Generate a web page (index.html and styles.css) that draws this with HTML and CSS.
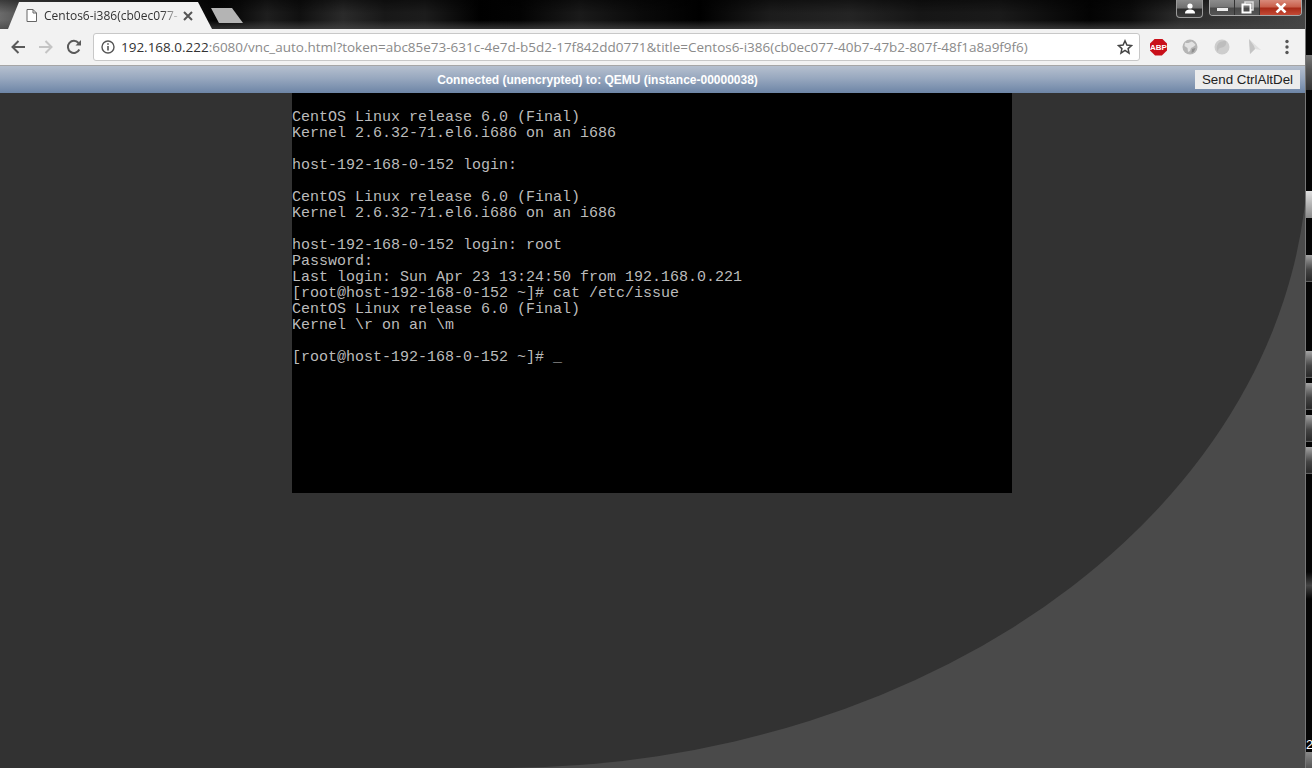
FILE: index.html
```html
<!DOCTYPE html>
<html lang="en">
<head>
<meta charset="utf-8">
<title>Centos6-i386</title>
<link rel="stylesheet" href="styles.css">
</head>
<body>
<div class="desktop">
  <div class="window">
    <header class="titlebar">
      <div class="tab">
        <svg class="tab-file" viewBox="0 0 11 13" width="11" height="13"><path d="M1 .5h6l3.500 3.500v8.500h-9.500z M7 .5v3.500h3.500" fill="#fff" stroke="#666" stroke-width="1"/></svg>
        <span class="tab-title">Centos6-i386(cb0ec077-</span>
        <svg class="tab-close" viewBox="0 0 10 10" width="10" height="10"><path d="M1 1l8 8M9 1l-8 8" stroke="#555" stroke-width="2"/></svg>
      </div>
      <div class="newtab"></div>
      <div class="winctl">
        <div class="userbtn">
          <svg viewBox="0 0 12 11" width="12" height="11"><circle cx="6" cy="3" r="2.600" fill="#fff"/><path d="M1 10.500c0-3 2-4 5-4s5 1 5 4z" fill="#fff"/></svg>
        </div>
        <div class="ctlgroup">
          <div class="ctl ctl-min"><span class="minbar"></span></div>
          <div class="ctl ctl-max">
            <svg viewBox="0 0 13 13" width="13" height="13"><path d="M4 3V1h8v8h-2" fill="none" stroke="#ddd" stroke-width="1.500"/><rect x="1.500" y="3.500" width="8" height="8" fill="none" stroke="#fff" stroke-width="2"/></svg>
          </div>
          <div class="ctl ctl-close">
            <svg viewBox="0 0 12 10" width="12" height="10"><path d="M1.500 .5l9 9M10.500 .5l-9 9" stroke="#fff" stroke-width="2.600"/></svg>
          </div>
        </div>
      </div>
    </header>

    <nav class="toolbar">
      <svg class="navicon" viewBox="0 0 16 16" width="16" height="16"><path d="M15 8H3M8.500 2L2.500 8l6 6" fill="none" stroke="#5a5a5a" stroke-width="2"/></svg>
      <svg class="navicon navicon-off" viewBox="0 0 16 16" width="16" height="16"><path d="M1 8h12M7.500 2l6 6-6 6" fill="none" stroke="#c4c4c4" stroke-width="2"/></svg>
      <svg class="navicon" viewBox="0 0 16 16" width="16" height="16"><path d="M13.300 10.500A6 6 0 1 1 12.500 4" fill="none" stroke="#5a5a5a" stroke-width="2"/><path d="M9.500 6.500H15V1z" fill="#5a5a5a"/></svg>
      <div class="omnibox">
        <svg class="info" viewBox="0 0 14 14" width="14" height="14"><circle cx="7" cy="7" r="6" fill="none" stroke="#555" stroke-width="1.400"/><path d="M7 6v4.500M7 3.200v1.600" stroke="#555" stroke-width="1.600"/></svg>
        <span class="url"><span class="url-host">192.168.0.222</span>:6080/vnc_auto.html?token=abc85e73-631c-4e7d-b5d2-17f842dd0771&amp;title=Centos6-i386(cb0ec077-40b7-47b2-807f-48f1a8a9f9f6)</span>
        <svg class="star" viewBox="0 0 16 16" width="16" height="16"><path d="M8 1.800l1.900 4.200 4.600.5-3.400 3.100.9 4.500L8 11.300l-4 2.800.9-4.500L1.500 6.500l4.600-.5z" fill="none" stroke="#444" stroke-width="1.500"/></svg>
      </div>
      <div class="extensions">
        <div class="abp">ABP</div>
        <svg class="ext" viewBox="0 0 16 16" width="16" height="16"><circle cx="8" cy="8" r="7.500" fill="#b5b5b5"/><path d="M3 3.500c2 1 5 .5 6-1 2 .5 4 2 4.500 3.500L11 8l-2 1-1 3-2 1-.5-4L2.500 7z" fill="#e2e2e2"/><path d="M10 10l3.500-1-1.500 3.500-2.500 1.500z" fill="#8f8f8f"/></svg>
        <svg class="ext" viewBox="0 0 16 16" width="16" height="16"><circle cx="8" cy="8" r="7.500" fill="#cdcdcd"/><path d="M4 5c2-3 5-3 8-3 1 3-1 6-4 6.500S4 10 4 13C2 10 2.500 7 4 5z" fill="#bdbdbd"/></svg>
        <svg class="ext" viewBox="0 0 16 16" width="16" height="16"><path d="M3 0l12 11-6-1-5 5z" fill="#e0e0e0"/><path d="M3 0l5 7 1 3-5 5z" fill="#c4c4c4"/></svg>
        <svg class="ext-menu" viewBox="0 0 4 16" width="4" height="16"><circle cx="2" cy="2.500" r="1.700" fill="#555"/><circle cx="2" cy="8" r="1.700" fill="#555"/><circle cx="2" cy="13.500" r="1.700" fill="#555"/></svg>
      </div>
    </nav>

    <div class="vncbar">
      <div class="vncstatus">Connected (unencrypted) to: QEMU (instance-00000038)</div>
      <button class="vncbtn" type="button">Send CtrlAltDel</button>
    </div>

    <main class="stage">
      <svg class="swoosh" viewBox="0 93 1305 675" width="1305" height="675" preserveAspectRatio="none"><path d="M0 93H1308V150A808 618 0 0 1 500 768H0Z" fill="#323232"/></svg>
      <pre class="console">CentOS Linux release 6.0 (Final)
Kernel 2.6.32-71.el6.i686 on an i686

host-192-168-0-152 login:

CentOS Linux release 6.0 (Final)
Kernel 2.6.32-71.el6.i686 on an i686

host-192-168-0-152 login: root
Password:
Last login: Sun Apr 23 13:24:50 from 192.168.0.221
[root@host-192-168-0-152 ~]# cat /etc/issue
CentOS Linux release 6.0 (Final)
Kernel \r on an \m

[root@host-192-168-0-152 ~]# _</pre>
    </main>
  </div>

  <aside class="edge">
    <i></i><b class="dull"></b>
    <i></i><b class="bright"></b>
    <i></i><b></b>
    <i></i><b></b>
    <i></i><b></b>
    <i></i><b></b>
    <i></i><b></b>
    <i></i><b class="faint"></b>
    <i></i><span class="edge-num">2</span>
    <b class="foot"></b>
  </aside>
</div>
</body>
</html>
```

FILE: styles.css
```css
* { box-sizing: border-box; }

html, body {
  margin: 0;
  height: 100%;
  overflow: hidden;
  background: #000;
}

.desktop {
  display: flex;
  width: 1312px;
  height: 768px;
}

.window {
  display: flex;
  flex-direction: column;
  width: 1305px;
  height: 768px;
}

/* Title strip */
.titlebar {
  display: flex;
  align-items: flex-start;
  height: 29px;
  flex: none;
  background:
    linear-gradient(to bottom, rgba(0,0,0,.45) 0, rgba(0,0,0,0) 45%, rgba(60,60,60,0) 70%, rgba(70,70,70,.7) 100%),
    linear-gradient(to right, #6a6a6a 0, #555 20px, #050505 215px, #0c0c0c 240px, #1e1e1e 267px, #101010 300px, #2a2a2a 343px, #181818 385px, #1c1c1c 425px, #000 480px, #030303 520px, #1a1a1a 580px, #0a0a0a 640px, #000 700px, #1c1c1c 770px, #242424 850px, #161616 920px, #1a1a1a 1000px, #030303 1090px, #0c0c0c 1130px, #2c2c2c 1180px, #444 1304px);
}

.tab {
  display: flex;
  align-items: center;
  width: 204px;
  height: 27px;
  margin: 2px 0 0 8px;
  padding: 0 19px 0 18px;
  background: #f2f2f2;
  clip-path: polygon(0 100%, 11px 0, 190px 0, 204px 100%);
}

.tab-file { flex: none; }

.tab-title {
  flex: 1;
  min-width: 0;
  margin-left: 7px;
  font: 12px "Open Sans", "Liberation Sans", sans-serif;
  color: #333;
  white-space: nowrap;
  -webkit-mask-image: linear-gradient(to right, #000 88%, rgba(0,0,0,.2) 100%);
  mask-image: linear-gradient(to right, #000 88%, rgba(0,0,0,.2) 100%);
}

.tab-close {
  flex: none;
  margin-left: 5px;
}

.newtab {
  flex: none;
  width: 32px;
  height: 15px;
  margin: 8px 0 0 -1px;
  background: #b4b4b4;
  clip-path: polygon(0 0, 21px 0, 32px 100%, 8px 100%);
}

.winctl {
  display: flex;
  align-items: flex-start;
  gap: 6px;
  margin-left: auto;
  padding-right: 3px;
}

.userbtn {
  display: flex;
  align-items: center;
  justify-content: center;
  width: 27px;
  height: 18px;
  border: 1px solid #9a9a9a;
  border-top: 0;
  border-radius: 0 0 4px 4px;
  background: linear-gradient(to bottom, #8a8a8a 0, #707070 45%, #2c2c2c 55%, #3c3c3c 100%);
}

.ctlgroup {
  display: flex;
  width: 93px;
  height: 16px;
  border: 1px solid #a8a8a8;
  border-top: 0;
  border-radius: 0 0 4px 4px;
  overflow: hidden;
}

.ctl {
  display: flex;
  align-items: center;
  justify-content: center;
  height: 100%;
}

.ctl-min, .ctl-max {
  width: 25px;
  border-right: 1px solid #333;
  background: linear-gradient(to bottom, #8c8c8c 0, #777 45%, #4a4a4a 55%, #555 100%);
}

.minbar {
  display: block;
  width: 11px;
  height: 3px;
  margin-top: 4px;
  background: #eee;
}

.ctl-close {
  flex: 1;
  background: linear-gradient(to bottom, #d98a7a 0, #c9604c 45%, #a92b18 55%, #c44a36 100%);
}

/* Toolbar */
.toolbar {
  display: flex;
  align-items: center;
  height: 37px;
  flex: none;
  padding-left: 10px;
  background: #f2f2f2;
  border-bottom: 1px solid #a6a6a6;
}

.navicon {
  flex: none;
  margin-right: 12px;
}

.omnibox {
  display: flex;
  align-items: center;
  flex: none;
  width: 1047px;
  height: 28px;
  margin-left: -1px;
  padding: 0 6px 0 7px;
  background: #fff;
  border: 1px solid #c8c8c8;
  border-radius: 3px;
}

.info { flex: none; }

.url {
  flex: 1;
  min-width: 0;
  margin-left: 6px;
  font: 13.47px "Open Sans", "Liberation Sans", sans-serif;
  color: #8a8a8a;
  white-space: nowrap;
}

.url-host { color: #333; }

.star { flex: none; }

.extensions {
  display: flex;
  align-items: center;
  flex: 1;
  padding-left: 10px;
}

.abp {
  display: flex;
  align-items: center;
  justify-content: center;
  flex: none;
  width: 17px;
  height: 17px;
  margin-right: 15px;
  background: #c9101a;
  clip-path: polygon(30% 0, 70% 0, 100% 30%, 100% 70%, 70% 100%, 30% 100%, 0 70%, 0 30%);
  font: bold 8px "Liberation Sans", sans-serif;
  color: #fff;
}

.ext {
  flex: none;
  margin-right: 16px;
}

.ext-menu {
  flex: none;
  margin-left: 7px;
}

/* noVNC bar */
.vncbar {
  display: flex;
  align-items: center;
  height: 27px;
  flex: none;
  padding-right: 5px;
  background: linear-gradient(to bottom, #b6c0cf 0, #98a8bf 45%, #6d85a6 100%);
}

.vncstatus {
  flex: 1;
  text-align: center;
  font: bold 12px "Liberation Sans", sans-serif;
  color: #fff;
}

.vncbtn {
  width: 105px;
  height: 19px;
  padding: 0;
  border: 0;
  background: #ececec;
  font: 13.33px "Liberation Sans", sans-serif;
  color: #222;
}

/* Canvas */
.stage {
  position: relative;
  display: flex;
  justify-content: center;
  align-items: flex-start;
  flex: 1;
  padding-right: 1px;
  background: #4a4a4a;
  overflow: hidden;
}

.swoosh {
  position: absolute;
  top: 0;
  left: 0;
}

.console {
  position: relative;
  width: 720px;
  height: 400px;
  margin: 0;
  padding-top: 17px;
  background: #000;
  font: 15px/16px "Liberation Mono", monospace;
  color: #bbb;
  overflow: hidden;
}

/* Right-hand edge of what's behind the window */
.edge {
  display: grid;
  grid-template-columns: 1fr;
  grid-template-rows: 55px 35px 101px 27px 37px 27px 69px 27px 5px 27px 5px 27px 5px 27px 98px 27px 138px 15px 16px;
  height: 768px;
  width: 7px;
  flex: none;
  border-left: 1px solid #777;
  background: #050505;
}

.edge i { display: block; }

.edge b {
  display: block;
  background: linear-gradient(to bottom, #a4a4a4 0, #444 55%, #2a2a2a 94%, #777 100%);
}

.edge b.dull { background: linear-gradient(to bottom, #777 0, #555 40%, #333 100%); }
.edge b.bright { background: linear-gradient(to bottom, #e0e0e0 0, #aaa 60%, #888 100%); }
.edge b.faint { background: linear-gradient(to bottom, #050505 0, #444 50%, #050505 100%); }
.edge b.foot { background: linear-gradient(to bottom, #8a8a8a 0, #555 100%); }

.edge-num {
  font: 13px/15px "Liberation Sans", sans-serif;
  color: #fff;
}
```
